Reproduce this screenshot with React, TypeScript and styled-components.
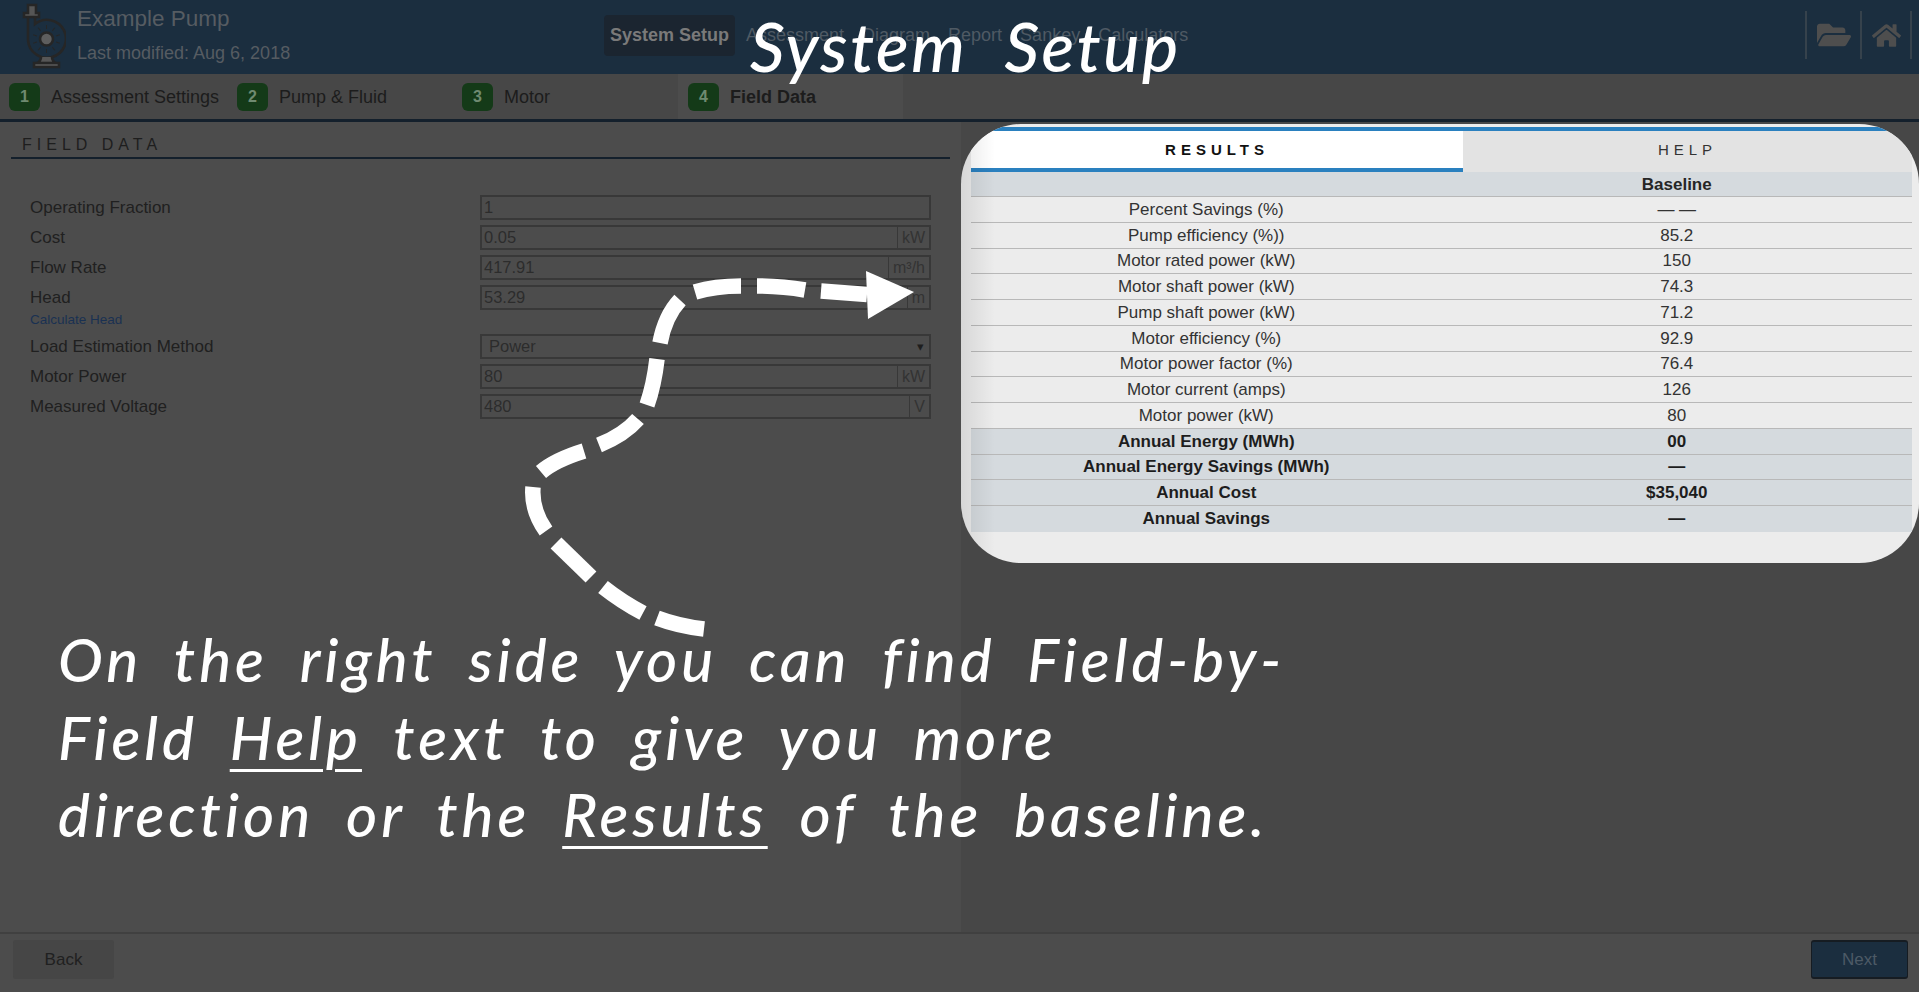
import React from 'react';
import styled, { createGlobalStyle } from 'styled-components';
import { FaFolderOpen, FaHome } from 'react-icons/fa';

const steps = [
  { num: 1, label: 'Assessment Settings', width: 228 },
  { num: 2, label: 'Pump & Fluid', width: 225 },
  { num: 3, label: 'Motor', width: 216 },
  { num: 4, label: 'Field Data', width: 225, active: true },
];

const navItems = ['Assessment', 'Diagram', 'Report', 'Sankey', 'Calculators'];

const fields = [
  { label: 'Operating Fraction', value: '1' },
  { label: 'Cost', value: '0.05', unit: 'kW' },
  { label: 'Flow Rate', value: '417.91', unit: 'm³/h' },
  { label: 'Head', value: '53.29', unit: 'm', link: 'Calculate Head' },
  { label: 'Load Estimation Method', value: 'Power', select: true },
  { label: 'Motor Power', value: '80', unit: 'kW' },
  { label: 'Measured Voltage', value: '480', unit: 'V' },
];

const results = [
  { label: 'Percent Savings (%)', value: '— —' },
  { label: 'Pump efficiency (%))', value: '85.2' },
  { label: 'Motor rated power (kW)', value: '150' },
  { label: 'Motor shaft power (kW)', value: '74.3' },
  { label: 'Pump shaft power (kW)', value: '71.2' },
  { label: 'Motor efficiency (%)', value: '92.9' },
  { label: 'Motor power factor (%)', value: '76.4' },
  { label: 'Motor current (amps)', value: '126' },
  { label: 'Motor power (kW)', value: '80' },
  { label: 'Annual Energy (MWh)', value: '00', bold: true },
  { label: 'Annual Energy Savings (MWh)', value: '—', bold: true },
  { label: 'Annual Cost', value: '$35,040', bold: true },
  { label: 'Annual Savings', value: '—', bold: true },
];

function PumpLogo() {
  const ticks = [0, 36, 72, 108, 144, 180, 216, 252, 288, 324];
  return (
    <svg width="46" height="70" viewBox="0 0 46 70">
      <g transform="translate(-20 -2)" fill="none" stroke="#262626" strokeWidth="2.6">
        <path d="M28 5h8v8h3v4H24v-4h4z" fill="#565656" />
        <path d="M28 17v23a19 19 0 1 0 7-16v-7" />
        <circle cx="46.5" cy="39" r="6.5" fill="#5e5e5e" />
        {ticks.map((a) => (
          <line key={a} x1="46.5" y1="29" x2="46.5" y2="25" strokeWidth="1" transform={`rotate(${a} 46.5 39)`} />
        ))}
        <path d="M41 57c0 3-1 5-5 7h21c-4-2-5-4-5-7" fill="#565656" />
        <rect x="34" y="63" width="25" height="4" fill="#5e5e5e" />
      </g>
    </svg>
  );
}

export default function App() {
  return (
    <Page>
      <GlobalStyle />

      <Header>
        <Brand>
          <PumpLogo />
          <BrandText>
            <AssessmentName>Example Pump</AssessmentName>
            <Modified>Last modified: Aug 6, 2018</Modified>
          </BrandText>
        </Brand>

        <Nav>
          <NavActive>System Setup</NavActive>
          {navItems.map((item) => (
            <NavItem key={item}>{item}</NavItem>
          ))}
        </Nav>

        <HeaderIcons>
          <IconCell $width={55}>
            <FaFolderOpen size={34} />
          </IconCell>
          <IconCell $width={50}>
            <FaHome size={29} />
          </IconCell>
        </HeaderIcons>
      </Header>

      <StepBar>
        {steps.map((step) => (
          <Step key={step.num} $width={step.width} $active={step.active}>
            <StepBadge>{step.num}</StepBadge>
            <StepLabel $active={step.active}>{step.label}</StepLabel>
          </Step>
        ))}
      </StepBar>

      <Body>
        <FormPanel>
          <FormTitle>FIELD DATA</FormTitle>
          <FormRows>
            {fields.map((field) => (
              <FormRow key={field.label} $tall={!!field.link}>
                <LabelCell>
                  <FieldLabel>{field.label}</FieldLabel>
                  {field.link && <HelpLink>{field.link}</HelpLink>}
                </LabelCell>
                <InputBox>
                  <InputValue $select={field.select}>{field.value}</InputValue>
                  {field.select && <SelectCaret>▾</SelectCaret>}
                  {field.unit && <Unit>{field.unit}</Unit>}
                </InputBox>
              </FormRow>
            ))}
          </FormRows>
        </FormPanel>
        <SidePanel />
      </Body>

      <Footer>
        <BackButton>Back</BackButton>
        <NextButton>Next</NextButton>
      </Footer>

      <ResultsCard>
        <TabRow>
          <Tab $active>RESULTS</Tab>
          <Tab>HELP</Tab>
        </TabRow>
        <HeadRow>
          <span />
          <span>Baseline</span>
        </HeadRow>
        {results.map((row) => (
          <ResultRow key={row.label} $bold={row.bold}>
            <span>{row.label}</span>
            <span>{row.value}</span>
          </ResultRow>
        ))}
      </ResultsCard>

      <TourTitle>System Setup</TourTitle>

      <TourArrow width="460" height="390" viewBox="0 0 460 390">
        <g fill="none" stroke="#fff" strokeWidth="15.5">
          <path d="M204 369Q178 366 157 358" />
          <path d="M143 353Q122 342 103 327" />
          <path d="M91 317L56 283" />
          <path d="M46 271Q31 250 33 227" />
          <path d="M41 212Q55 200 84 191" />
          <path d="M99 185Q124 175 138 159" />
          <path d="M147 145Q154 125 157 99" />
          <path d="M160 83Q165 56 180 40" />
          <path d="M195 32Q215 26 241 26" />
          <path d="M257 26Q282 26 305 30" />
          <path d="M321 31L367 34.5" />
        </g>
        <path d="M366 11L414 32L368 59z" fill="#fff" />
      </TourArrow>

      <Caption>
        <CaptionLine>On the right side you can find Field-by-</CaptionLine>
        <CaptionLine>
          Field <Marked>Help</Marked> text to give you more
        </CaptionLine>
        <CaptionLine>
          direction or the <Marked>Results</Marked> of the baseline.
        </CaptionLine>
      </Caption>
    </Page>
  );
}

const GlobalStyle = createGlobalStyle`
  html, body {
    margin: 0;
    padding: 0;
    background: #4c4c4c;
  }
  * {
    box-sizing: border-box;
  }
`;

const handFont = `Lato, "Liberation Sans", sans-serif`;

const Page = styled.div`
  position: relative;
  width: 1919px;
  height: 992px;
  overflow: hidden;
  display: flex;
  flex-direction: column;
  font-family: 'Liberation Sans', Arial, sans-serif;
  font-size: 17px;
  color: #262626;
`;

const Header = styled.header`
  height: 74px;
  flex: none;
  display: flex;
  align-items: stretch;
  background: #1b2e3f;
`;

const Brand = styled.div`
  width: 604px;
  flex: none;
  display: flex;
  align-items: flex-start;
  padding: 2px 0 0 20px;
  gap: 11px;
`;

const BrandText = styled.div`
  display: flex;
  flex-direction: column;
  padding-top: 5px;
`;

const AssessmentName = styled.div`
  font-size: 22.5px;
  line-height: 24px;
  color: #565c62;
`;

const Modified = styled.div`
  font-size: 18px;
  line-height: 18px;
  margin-top: 13px;
  color: #565c62;
`;

const Nav = styled.nav`
  display: flex;
  align-items: center;
  gap: 18px;
  height: 41px;
  margin-top: 15px;
  font-size: 18px;
`;

const NavActive = styled.div`
  height: 41px;
  width: 131px;
  margin-right: -7px;
  display: flex;
  align-items: center;
  justify-content: center;
  border-radius: 4px;
  background: #1b2530;
  color: #7a7a7a;
  font-weight: 700;
`;

const NavItem = styled.div`
  color: #4f5a64;
`;

const HeaderIcons = styled.div`
  margin-left: auto;
  margin-right: 7px;
  height: 48px;
  margin-top: 11px;
  display: flex;
  border-right: 2px solid #36424c;
`;

const IconCell = styled.div<{ $width: number }>`
  width: ${({ $width }) => $width}px;
  display: flex;
  align-items: center;
  justify-content: center;
  border-left: 2px solid #36424c;
  color: #4e4e4e;
`;

const StepBar = styled.div`
  height: 48px;
  flex: none;
  display: flex;
  padding-left: 9px;
  background: #474747;
  border-bottom: 3px solid #14202c;
`;

const Step = styled.div<{ $width: number; $active?: boolean }>`
  width: ${({ $width }) => $width}px;
  display: flex;
  align-items: center;
  gap: 11px;
  padding-top: 1px;
  padding-left: ${({ $active }) => ($active ? '10px' : '0')};
  background: ${({ $active }) => ($active ? '#4c4c4c' : 'transparent')};
`;

const StepBadge = styled.div`
  width: 31px;
  height: 28px;
  display: flex;
  align-items: center;
  justify-content: center;
  border-radius: 6px;
  background: #143a18;
  color: #6f8a70;
  font-weight: 700;
  font-size: 16px;
`;

const StepLabel = styled.div<{ $active?: boolean }>`
  font-size: 18px;
  color: #1c1c1c;
  font-weight: ${({ $active }) => ($active ? 700 : 400)};
`;

const Body = styled.main`
  flex: 1;
  display: flex;
  min-height: 0;
`;

const FormPanel = styled.section`
  width: 961px;
  flex: none;
  padding: 14px 11px 0;
  background: #4c4c4c;
`;

const FormTitle = styled.h2`
  margin: 0;
  height: 23px;
  padding: 1px 0 0 11px;
  border-bottom: 2px solid #14202c;
  font-size: 16px;
  line-height: 16px;
  font-weight: 400;
  letter-spacing: 5px;
  color: #1e1e1e;
`;

const FormRows = styled.div`
  display: flex;
  flex-direction: column;
  padding: 36px 19px 0 19px;
  gap: 5px;
`;

const FormRow = styled.div<{ $tall: boolean }>`
  display: flex;
  justify-content: space-between;
  height: ${({ $tall }) => ($tall ? '44px' : '25px')};
`;

const LabelCell = styled.div`
  display: flex;
  flex-direction: column;
`;

const FieldLabel = styled.div`
  line-height: 25px;
  color: #202020;
`;

const HelpLink = styled.div`
  font-size: 13.5px;
  line-height: 15px;
  margin-top: 2px;
  color: #1a3152;
`;

const InputBox = styled.div`
  width: 451px;
  height: 25px;
  display: flex;
  align-items: center;
  border: 2px solid #383838;
`;

const InputValue = styled.div<{ $select?: boolean }>`
  flex: 1;
  padding-left: ${({ $select }) => ($select ? '7px' : '2px')};
  font-size: 16.5px;
  color: #2c2c2c;
`;

const SelectCaret = styled.span`
  font-size: 13px;
  margin-right: 5px;
  color: #1e1e1e;
`;

const Unit = styled.div`
  height: 100%;
  padding: 0 4px;
  display: flex;
  align-items: center;
  border-left: 1px solid #383838;
  font-size: 16px;
  color: #333;
`;

const SidePanel = styled.aside`
  flex: 1;
  background: #474747;
`;

const Footer = styled.footer`
  height: 60px;
  flex: none;
  display: flex;
  justify-content: space-between;
  padding: 6px 11px 0 13px;
  border-top: 2px solid #404040;
  background: #4c4c4c;
`;

const BackButton = styled.div`
  width: 101px;
  height: 39px;
  display: flex;
  align-items: center;
  justify-content: center;
  border-radius: 3px;
  background: #464646;
  color: #202020;
  font-size: 17px;
`;

const NextButton = styled.div`
  width: 97px;
  height: 39px;
  display: flex;
  align-items: center;
  justify-content: center;
  border-radius: 3px;
  border: 1px solid #161c22;
  border-top-width: 2px;
  border-bottom-width: 2px;
  background: #1b2e3f;
  color: #4d5a66;
  font-size: 17px;
`;

const ResultsCard = styled.div`
  position: absolute;
  left: 961px;
  top: 124px;
  width: 958px;
  height: 439px;
  padding: 3px 7px 0 10px;
  border-radius: 60px;
  overflow: hidden;
  background: #ececec;

  &::after {
    content: '';
    position: absolute;
    left: 0;
    top: 0;
    bottom: 0;
    width: 34px;
    background: linear-gradient(90deg, rgba(0, 0, 0, 0.09), rgba(0, 0, 0, 0));
  }
`;

const TabRow = styled.div`
  display: grid;
  grid-template-columns: 492px 1fr;
  border-top: 4px solid #2a80bf;
`;

const Tab = styled.div<{ $active?: boolean }>`
  height: 41px;
  display: flex;
  align-items: center;
  justify-content: center;
  font-size: 15px;
  letter-spacing: 5px;
  font-weight: ${({ $active }) => ($active ? 700 : 400)};
  color: ${({ $active }) => ($active ? '#111' : '#333')};
  background: ${({ $active }) => ($active ? '#fff' : '#e3e3e3')};
  padding-bottom: ${({ $active }) => ($active ? '0' : '4px')};
  border-bottom: ${({ $active }) => ($active ? '4px solid #2a80bf' : '0')};
`;

const HeadRow = styled.div`
  display: grid;
  grid-template-columns: 1fr 1fr;
  height: 25px;
  padding-top: 1px;
  align-items: center;
  text-align: center;
  font-weight: 700;
  background: #d5dade;
  border-bottom: 1px solid #b8b8b8;
`;

const ResultRow = styled.div<{ $bold?: boolean }>`
  display: grid;
  grid-template-columns: 1fr 1fr;
  height: 25.75px;
  padding-top: 1px;
  align-items: center;
  text-align: center;
  color: ${({ $bold }) => ($bold ? '#1d1d1d' : '#333')};
  font-weight: ${({ $bold }) => ($bold ? 700 : 400)};
  background: ${({ $bold }) => ($bold ? '#d5dade' : 'transparent')};
  border-bottom: 1px solid #b8b8b8;

  &:last-child {
    border-bottom: 0;
  }
`;

const TourTitle = styled.div`
  position: absolute;
  left: 750px;
  top: 8px;
  font-family: ${handFont};
  font-style: italic;
  font-weight: 500;
  font-size: 68px;
  line-height: 76px;
  letter-spacing: 2.5px;
  word-spacing: 19px;
  white-space: nowrap;
  color: #fff;
`;

const TourArrow = styled.svg`
  position: absolute;
  left: 500px;
  top: 260px;
`;

const Caption = styled.div`
  position: absolute;
  left: 58px;
  top: 621px;
  font-family: ${handFont};
  font-style: italic;
  font-weight: 500;
  font-size: 60px;
  line-height: 77.5px;
  letter-spacing: 4px;
  word-spacing: 14px;
  white-space: nowrap;
  color: #fff;
`;

const CaptionLine = styled.div``;

const Marked = styled.span`
  text-decoration: underline;
  text-decoration-thickness: 3px;
  text-underline-offset: 9px;
`;
